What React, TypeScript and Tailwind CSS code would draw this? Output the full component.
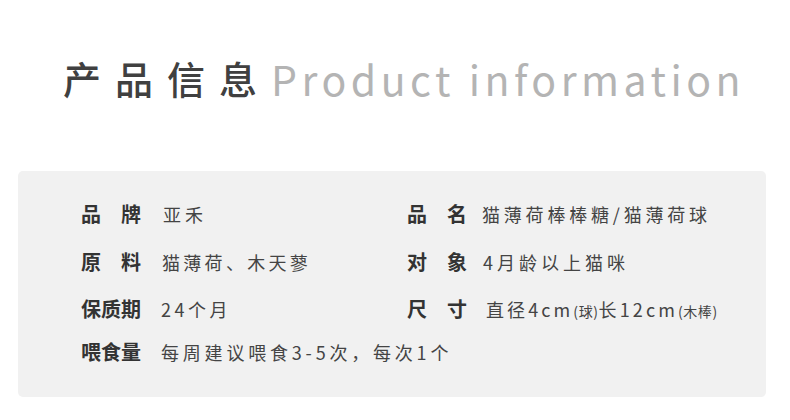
import React from "react";

const font = { fontFamily: '"Noto Sans CJK SC", "Noto Sans", sans-serif' };

function Label({ chars }: { chars: string[] }) {
  return (
    <div className="flex w-[60px] shrink-0 justify-between text-[20px] font-bold leading-[28px] text-[#333333]">
      {chars.map((c, i) => (
        <span key={i}>{c}</span>
      ))}
    </div>
  );
}

export default function App() {
  return (
    <div className="w-[790px] h-[420px] bg-white overflow-hidden" style={font}>
      <div className="flex items-center h-[60px] mt-[48px] pl-[63px] whitespace-nowrap">
        <span className="text-[38px] tracking-[14px] text-[#404040] leading-none font-medium">产品信息</span>
        <span className="text-[41px] tracking-[4.5px] text-[#b4b4b4] leading-none ml-[0px]">Product information</span>
      </div>
      <div className="ml-[18px] w-[748px] mt-[63px] h-[226px] rounded-[5px] bg-[#f1f1f1] pt-[29px] text-[#444444]">
        <div className="grid grid-cols-[326px_1fr] pl-[63px]">
          <div className="flex items-center h-[28px]">
            <Label chars={["品", "牌"]} />
            <span className="ml-[22px] text-[18px] tracking-[4px]">亚禾</span>
          </div>
          <div className="flex items-center h-[28px]">
            <Label chars={["品", "名"]} />
            <span className="ml-[15px] text-[18px] tracking-[3.8px]">猫薄荷棒棒糖/猫薄荷球</span>
          </div>
          <div className="flex items-center h-[28px] mt-[20px]">
            <Label chars={["原", "料"]} />
            <span className="ml-[21px] text-[18px] tracking-[3.3px]">猫薄荷、木天蓼</span>
          </div>
          <div className="flex items-center h-[28px] mt-[20px]">
            <Label chars={["对", "象"]} />
            <span className="ml-[16px] text-[18px] tracking-[4px]">4月龄以上猫咪</span>
          </div>
          <div className="flex items-center h-[28px] mt-[19px]">
            <Label chars={["保", "质", "期"]} />
            <span className="ml-[20px] text-[18px] tracking-[3.5px]">24个月</span>
          </div>
          <div className="flex items-center h-[28px] mt-[19px]">
            <Label chars={["尺", "寸"]} />
            <span className="ml-[19px] text-[18px] tracking-[3.1px] flex items-baseline">
              直径4cm<span className="text-[14px] tracking-[0.6px]">(球)</span>长12cm<span className="text-[14px] tracking-[0.6px]">(木棒)</span>
            </span>
          </div>
          <div className="col-span-2 flex items-center h-[28px] mt-[15px]">
            <Label chars={["喂", "食", "量"]} />
            <span className="ml-[20px] text-[18px] tracking-[3.8px]">每周建议喂食3-5次，每次1个</span>
          </div>
        </div>
      </div>
    </div>
  );
}
